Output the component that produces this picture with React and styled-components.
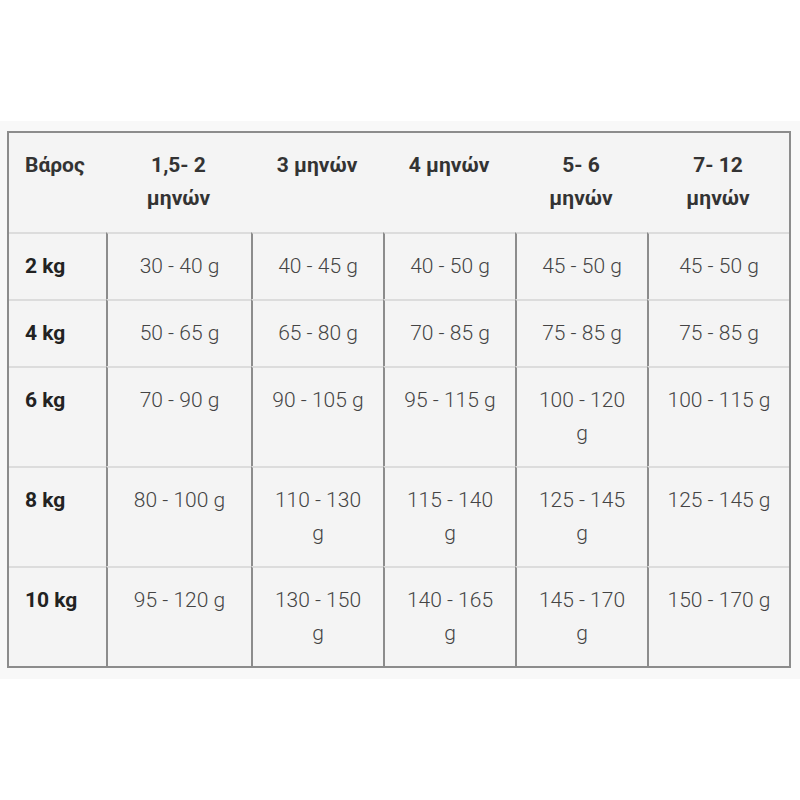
import React from "react";
import styled, { createGlobalStyle } from "styled-components";

const Global = createGlobalStyle`
  html, body { margin: 0; padding: 0; background: #ffffff; }
  body { font-family: Roboto, "Noto Sans", "Liberation Sans", sans-serif; }
`;

const Page = styled.div`
  width: 800px;
  height: 800px;
  display: flex;
  flex-direction: column;
  justify-content: flex-start;
  padding-top: 121px;
  box-sizing: border-box;
`;

const Panel = styled.div`
  background: #f8f8f8;
  padding: 10px 9px 11px 7px;
`;

const Table = styled.div`
  display: grid;
  grid-template-columns: 97px 145px 132px 132px 132px 142px;
  width: 784px;
  box-sizing: border-box;
  border: 2px solid #8c8c8c;
  background: #f4f4f4;
`;

const HeadCell = styled.div`
  box-sizing: border-box;
  padding: 16px 15px 17px;
  font-size: 21px;
  line-height: 33px;
  font-weight: 700;
  color: #333333;
  text-align: ${(p) => (p.$first ? "left" : "center")};
  ${(p) => (p.$first ? "padding-left: 16px;" : "")}
`;

const Cell = styled.div`
  box-sizing: border-box;
  padding: 16px 15px 16px;
  font-size: 21px;
  line-height: 33px;
  border-top: 2px solid #dcdcdc;
  border-left: ${(p) => (p.$first ? "none" : "2px solid #8c8c8c")};
  font-weight: ${(p) => (p.$first ? 700 : 300)};
  color: ${(p) => (p.$first ? "#222222" : "#444444")};
  text-align: ${(p) => (p.$first ? "left" : "center")};
  ${(p) => (p.$first ? "padding-left: 16px;" : "")}
`;

const headers = ["Βάρος", "1,5- 2 μηνών", "3 μηνών", "4 μηνών", "5- 6 μηνών", "7- 12 μηνών"];

const rows = [
  ["2 kg", "30 - 40 g", "40 - 45 g", "40 - 50 g", "45 - 50 g", "45 - 50 g"],
  ["4 kg", "50 - 65 g", "65 - 80 g", "70 - 85 g", "75 - 85 g", "75 - 85 g"],
  ["6 kg", "70 - 90 g", "90 - 105 g", "95 - 115 g", "100 - 120 g", "100 - 115 g"],
  ["8 kg", "80 - 100 g", "110 - 130 g", "115 - 140 g", "125 - 145 g", "125 - 145 g"],
  ["10 kg", "95 - 120 g", "130 - 150 g", "140 - 165 g", "145 - 170 g", "150 - 170 g"],
];

export default function App() {
  return (
    <>
      <Global />
      <Page>
        <Panel>
          <Table>
            {headers.map((h, i) => (
              <HeadCell key={h} $first={i === 0}>
                {h}
              </HeadCell>
            ))}
            {rows.map((r) =>
              r.map((v, i) => (
                <Cell key={r[0] + i} $first={i === 0}>
                  {v}
                </Cell>
              ))
            )}
          </Table>
        </Panel>
      </Page>
    </>
  );
}
